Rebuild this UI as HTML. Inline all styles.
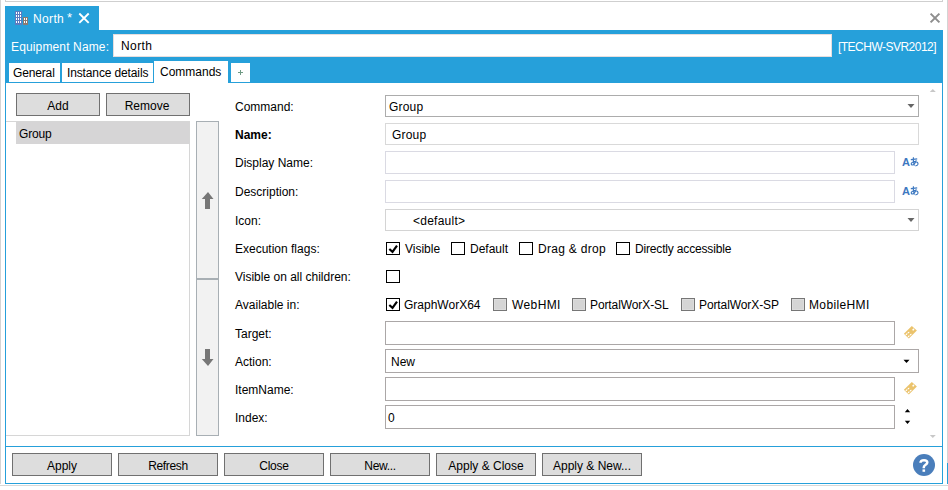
<!DOCTYPE html>
<html><head><meta charset="utf-8">
<style>
html,body{margin:0;padding:0;}
body{width:948px;height:490px;position:relative;overflow:hidden;background:#fff;font-family:"Liberation Sans",sans-serif;font-size:12px;color:#000;}
.a{position:absolute;box-sizing:border-box;}
.t{position:absolute;white-space:nowrap;line-height:14px;}
.btn{position:absolute;box-sizing:border-box;background:#dddddd;border:1px solid #707070;text-align:center;line-height:20px;padding-top:2px;color:#000;}
.lbl{position:absolute;left:235px;white-space:nowrap;line-height:14px;}
.cb{position:absolute;box-sizing:border-box;width:14px;height:13px;border:1px solid #000;background:#fff;}
.cbd{position:absolute;box-sizing:border-box;width:14px;height:13px;border:1px solid #767676;background:#d5d5d5;box-shadow:inset 0 0 0 1px #dcdcdc;}
</style></head><body>
<!-- outer frame -->
<div class="a" style="left:0;top:0;width:1px;height:484px;background:#d4d4d4"></div>
<div class="a" style="left:5px;top:-2px;width:938px;height:4px;border:1px solid #cfcfcf;border-top:none"></div>
<div class="a" style="left:947px;top:0;width:1px;height:463px;background:#d4d4d4"></div>
<div class="a" style="left:947px;top:463px;width:1px;height:21px;background:#26a0da"></div>
<div class="a" style="left:0;top:485px;width:948px;height:1px;background:#d8d8d8"></div>

<!-- blue tab -->
<div class="a" style="left:5px;top:6px;width:94px;height:24px;background:#26a0da"></div>
<!-- building icon -->
<svg class="a" style="left:15px;top:11px" width="14" height="14" viewBox="0 0 14 14" shape-rendering="crispEdges">
<rect x="0" y="0" width="7" height="14" fill="#5b7cc0"/>
<g fill="#fff">
<rect x="1" y="1" width="1" height="2"/><rect x="3" y="1" width="1" height="2"/><rect x="5" y="1" width="1" height="2"/>
<rect x="1" y="4" width="1" height="2"/><rect x="3" y="4" width="1" height="2"/><rect x="5" y="4" width="1" height="2"/>
<rect x="1" y="7" width="1" height="2"/><rect x="3" y="7" width="1" height="2"/><rect x="5" y="7" width="1" height="2"/>
<rect x="1" y="10" width="1" height="2"/><rect x="3" y="10" width="1" height="2"/><rect x="5" y="10" width="1" height="2"/>
</g>
<rect x="8" y="6" width="5" height="8" fill="#8b7b72"/>
<g fill="#fff">
<rect x="9" y="7" width="1" height="2"/><rect x="11" y="7" width="1" height="2"/>
<rect x="9" y="10" width="1" height="2"/><rect x="11" y="10" width="1" height="2"/>
</g>
</svg>
<div class="t" style="left:33px;top:12px;color:#fff;letter-spacing:0.35px">North</div>
<div class="t" style="left:67px;top:11px;color:#fff;font-size:13px">*</div>
<svg class="a" style="left:78px;top:12px" width="12" height="12" viewBox="0 0 12 12"><path d="M1.3 1.5L10.7 10.9M10.7 1.5L1.3 10.9" stroke="#fff" stroke-width="1.9"/></svg>

<!-- top right close -->
<svg class="a" style="left:929px;top:12px" width="12" height="12" viewBox="0 0 12 12"><path d="M1.6 1.6L10.4 10.4M10.4 1.6L1.6 10.4" stroke="#8e8e8e" stroke-width="2"/></svg>

<!-- blue header panel -->
<div class="a" style="left:5px;top:30px;width:938px;height:53px;background:#26a0da"></div>
<div class="t" style="left:11px;top:40px;color:#fff;letter-spacing:0.14px">Equipment Name:</div>
<div class="a" style="left:113px;top:34px;width:719px;height:23px;background:#fff;border:1px solid #e6dede"></div>
<div class="t" style="left:121px;top:39px;letter-spacing:0.4px">North</div>
<div class="t" style="left:838px;top:40px;color:#fff;letter-spacing:-0.52px">[TECHW-SVR2012]</div>

<!-- tabs -->
<div class="a" style="left:9px;top:63px;width:51px;height:19px;background:#fff"></div>
<div class="t" style="left:13px;top:66px;letter-spacing:-0.15px">General</div>
<div class="a" style="left:62px;top:63px;width:91px;height:19px;background:#fff"></div>
<div class="t" style="left:67px;top:66px;letter-spacing:-0.13px">Instance details</div>
<div class="a" style="left:154px;top:61px;width:74px;height:22px;background:#fff"></div>
<div class="t" style="left:160px;top:65px">Commands</div>
<div class="a" style="left:231px;top:63px;width:19px;height:19px;background:#fff"></div>
<svg class="a" style="left:238px;top:70px" width="6" height="6" shape-rendering="crispEdges"><rect x="0" y="2" width="5" height="1" fill="#6f9a84"/><rect x="2" y="0" width="1" height="5" fill="#6f9a84"/></svg>

<!-- content frame -->
<div class="a" style="left:5px;top:83px;width:938px;height:401px;border:1px solid #26a0da;border-top:none"></div>
<div class="a" style="left:6px;top:446px;width:936px;height:1px;background:#26a0da"></div>

<!-- left panel -->
<div class="btn" style="left:16px;top:93px;width:84px;height:23px">Add</div>
<div class="btn" style="left:106px;top:93px;width:84px;height:23px;padding-right:2px">Remove</div>
<div class="a" style="left:6px;top:121px;width:184px;height:315px;border:1px solid #d6d6d6;border-left:none"></div>
<div class="a" style="left:16px;top:122px;width:173px;height:22px;background:#d6d5d6"></div>
<div class="t" style="left:19px;top:127px;letter-spacing:-0.2px">Group</div>

<!-- sidebar -->
<div class="a" style="left:196px;top:121px;width:23px;height:158px;background:#f2f2f2;border:1px solid #a8afb4"></div>
<div class="a" style="left:196px;top:279px;width:23px;height:157px;background:#f2f2f2;border:1px solid #a8afb4"></div>
<svg class="a" style="left:200px;top:190px" width="16" height="22" viewBox="0 0 16 22"><path d="M8 2L13.5 9H10V19H5V9H1.8Z" fill="#777"/></svg>
<svg class="a" style="left:200px;top:347px" width="16" height="22" viewBox="0 0 16 22"><path d="M8 19L13.5 12H10V2H5V12H1.8Z" fill="#777"/></svg>

<!-- form labels -->
<div class="lbl" style="top:100px">Command:</div>
<div class="lbl" style="top:128px;font-weight:bold">Name:</div>
<div class="lbl" style="top:156px">Display Name:</div>
<div class="lbl" style="top:185px">Description:</div>
<div class="lbl" style="top:214px">Icon:</div>
<div class="lbl" style="top:242px">Execution flags:</div>
<div class="lbl" style="top:270px">Visible on all children:</div>
<div class="lbl" style="top:298px">Available in:</div>
<div class="lbl" style="top:327px">Target:</div>
<div class="lbl" style="top:355px">Action:</div>
<div class="lbl" style="top:383px">ItemName:</div>
<div class="lbl" style="top:411px">Index:</div>

<!-- inputs -->
<div class="a" style="left:385px;top:95px;width:534px;height:22px;border:1px solid #acacac"></div>
<div class="t" style="left:389px;top:100px;letter-spacing:0.2px">Group</div>
<svg class="a" style="left:907px;top:103px" width="8" height="6"><path d="M0.5 1H7.5L4 5Z" fill="#666"/></svg>

<div class="a" style="left:385px;top:123px;width:534px;height:22px;border:1px solid #d9d9d9"></div>
<div class="t" style="left:392px;top:128px;letter-spacing:0.2px">Group</div>

<div class="a" style="left:385px;top:151px;width:510px;height:23px;border:1px solid #dadae3"></div>
<div class="a" style="left:385px;top:180px;width:510px;height:23px;border:1px solid #dadae3"></div>

<div class="a" style="left:385px;top:209px;width:534px;height:22px;border:1px solid #d4d4d4"></div>
<div class="t" style="left:413px;top:214px;letter-spacing:0.25px">&lt;default&gt;</div>
<svg class="a" style="left:907px;top:217px" width="8" height="6"><path d="M0.5 1H7.5L4 5Z" fill="#666"/></svg>

<!-- checkboxes -->
<div class="cb" style="left:386px;top:242px"></div>
<svg class="a" style="left:386px;top:242px" width="14" height="13"><path d="M3.3 7L6.5 9.8L11 3.6" stroke="#000" stroke-width="2.2" fill="none"/></svg>
<div class="t" style="left:405px;top:242px">Visible</div>
<div class="cb" style="left:451px;top:242px"></div>
<div class="t" style="left:470px;top:242px">Default</div>
<div class="cb" style="left:519px;top:242px"></div>
<div class="t" style="left:538px;top:242px;letter-spacing:0.3px">Drag &amp; drop</div>
<div class="cb" style="left:616px;top:242px"></div>
<div class="t" style="left:635px;top:242px;letter-spacing:-0.17px">Directly accessible</div>

<div class="cb" style="left:386px;top:270px"></div>

<div class="cb" style="left:386px;top:298px"></div>
<svg class="a" style="left:386px;top:298px" width="14" height="13"><path d="M3.3 7L6.5 9.8L11 3.6" stroke="#000" stroke-width="2.2" fill="none"/></svg>
<div class="t" style="left:404px;top:298px">GraphWorX64</div>
<div class="cbd" style="left:493px;top:298px"></div>
<div class="t" style="left:512px;top:298px;letter-spacing:0.4px">WebHMI</div>
<div class="cbd" style="left:572px;top:298px"></div>
<div class="t" style="left:590px;top:298px;letter-spacing:-0.1px">PortalWorX-SL</div>
<div class="cbd" style="left:681px;top:298px"></div>
<div class="t" style="left:699px;top:298px;letter-spacing:-0.1px">PortalWorX-SP</div>
<div class="cbd" style="left:791px;top:298px"></div>
<div class="t" style="left:809px;top:298px;letter-spacing:0.37px">MobileHMI</div>

<!-- lower inputs -->
<div class="a" style="left:385px;top:321px;width:510px;height:24px;border:1px solid #aba7a7"></div>
<div class="a" style="left:385px;top:349px;width:534px;height:24px;border:1px solid #aba7a7"></div>
<div class="t" style="left:391px;top:355px">New</div>
<svg class="a" style="left:903px;top:359px" width="8" height="5"><path d="M0.5 0.8H6.5L3.5 4Z" fill="#000"/></svg>
<div class="a" style="left:385px;top:377px;width:510px;height:24px;border:1px solid #aba7a7"></div>
<div class="a" style="left:385px;top:405px;width:510px;height:24px;border:1px solid #aba7a7"></div>
<div class="t" style="left:388px;top:411px">0</div>
<svg class="a" style="left:904px;top:408px" width="8" height="18"><path d="M0.8 4.2H6.2L3.5 1Z M0.8 12.8H6.2L3.5 16Z" fill="#000"/></svg>

<!-- tag icons -->
<svg class="a" style="left:900px;top:322px" width="22" height="20" viewBox="0 0 22 20"><polygon points="11.8,4.1 16.9,8.6 8.8,16.5 3.9,11.8" fill="#ebc36c"/><ellipse cx="13.3" cy="7.6" rx="1.1" ry="0.9" transform="rotate(-42 13.3 7.6)" fill="#fff"/><ellipse cx="6.5" cy="12.2" rx="1.1" ry="0.7" transform="rotate(-42 6.5 12.2)" fill="#fff"/><ellipse cx="8.5" cy="10.6" rx="1.1" ry="0.7" transform="rotate(-42 8.5 10.6)" fill="#fff"/><ellipse cx="8.7" cy="14.3" rx="1.1" ry="0.7" transform="rotate(-42 8.7 14.3)" fill="#fff"/><ellipse cx="10.7" cy="12.6" rx="1.1" ry="0.7" transform="rotate(-42 10.7 12.6)" fill="#fff"/></svg>
<svg class="a" style="left:900px;top:378px" width="22" height="20" viewBox="0 0 22 20"><polygon points="11.8,4.1 16.9,8.6 8.8,16.5 3.9,11.8" fill="#ebc36c"/><ellipse cx="13.3" cy="7.6" rx="1.1" ry="0.9" transform="rotate(-42 13.3 7.6)" fill="#fff"/><ellipse cx="6.5" cy="12.2" rx="1.1" ry="0.7" transform="rotate(-42 6.5 12.2)" fill="#fff"/><ellipse cx="8.5" cy="10.6" rx="1.1" ry="0.7" transform="rotate(-42 8.5 10.6)" fill="#fff"/><ellipse cx="8.7" cy="14.3" rx="1.1" ry="0.7" transform="rotate(-42 8.7 14.3)" fill="#fff"/><ellipse cx="10.7" cy="12.6" rx="1.1" ry="0.7" transform="rotate(-42 10.7 12.6)" fill="#fff"/></svg>

<!-- Aあ icons -->
<div class="t" style="left:902px;top:155px;color:#3d78c0;font-weight:bold;font-size:11px">A</div>
<svg class="a" style="left:910px;top:157px" width="9" height="10" viewBox="0 0 9 10"><path d="M0.8 2.6L7.2 1.9M3.4 0.3C3.2 3 3.5 6 4.4 8.6M6.3 3.3C5.3 6 3.4 8.3 2 7.9C0.6 7.5 1 5 4.3 4.6C7 4.3 8.3 5.6 8 7.2C7.7 8.3 6.6 8.8 5.4 8.9" stroke="#3d78c0" stroke-width="1.15" fill="none"/></svg>
<div class="t" style="left:902px;top:184px;color:#3d78c0;font-weight:bold;font-size:11px">A</div>
<svg class="a" style="left:910px;top:186px" width="9" height="10" viewBox="0 0 9 10"><path d="M0.8 2.6L7.2 1.9M3.4 0.3C3.2 3 3.5 6 4.4 8.6M6.3 3.3C5.3 6 3.4 8.3 2 7.9C0.6 7.5 1 5 4.3 4.6C7 4.3 8.3 5.6 8 7.2C7.7 8.3 6.6 8.8 5.4 8.9" stroke="#3d78c0" stroke-width="1.15" fill="none"/></svg>

<!-- scroll arrows -->
<svg class="a" style="left:929px;top:88px" width="8" height="5"><path d="M0.8 4H6.8L3.8 1Z" fill="#c8c8c8"/></svg>
<svg class="a" style="left:929px;top:434px" width="8" height="5"><path d="M0.8 1H6.8L3.8 4Z" fill="#c8c8c8"/></svg>

<!-- bottom buttons -->
<div class="btn" style="left:12px;top:453px;width:100px;height:23px">Apply</div>
<div class="btn" style="left:118px;top:453px;width:100px;height:23px;letter-spacing:-0.33px">Refresh</div>
<div class="btn" style="left:224px;top:453px;width:100px;height:23px;letter-spacing:-0.25px">Close</div>
<div class="btn" style="left:330px;top:453px;width:100px;height:23px;letter-spacing:-0.33px">New...</div>
<div class="btn" style="left:436px;top:453px;width:100px;height:23px">Apply &amp; Close</div>
<div class="btn" style="left:542px;top:453px;width:100px;height:23px">Apply &amp; New...</div>

<!-- help -->
<svg class="a" style="left:912px;top:453px" width="24" height="24" viewBox="0 0 24 24"><circle cx="12" cy="12" r="11" fill="#4a7ebb"/><path d="M8.5 9.8C8.5 8 10 7.2 12 7.2C14.1 7.2 15.3 8.2 15.3 9.6C15.3 11.7 11.8 11.9 11.8 14.2V15.2" stroke="#fff" stroke-width="2.5" fill="none"/><rect x="10.5" y="16.4" width="2.6" height="2.4" fill="#fff"/></svg>
</body></html>
